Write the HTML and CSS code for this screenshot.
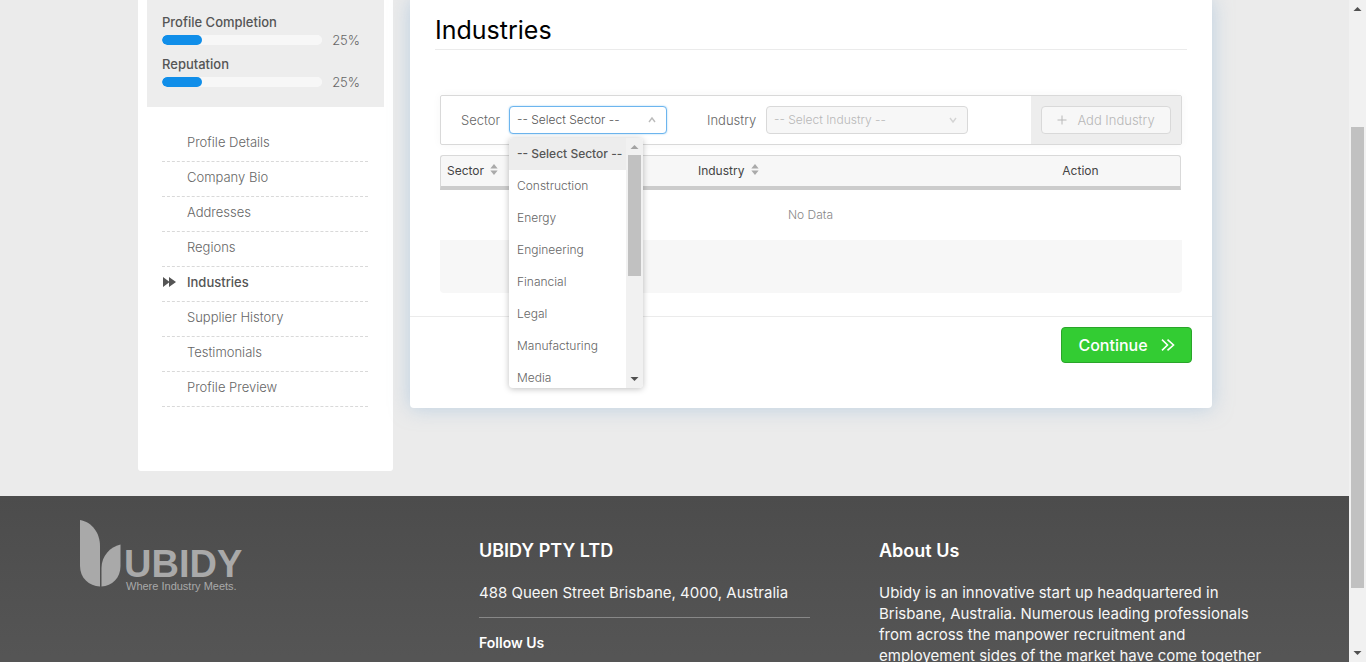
FILE: index.html
```html
<!DOCTYPE html>
<html lang="en">
<head>
<meta charset="utf-8">
<title>Industries - Ubidy</title>
<link rel="stylesheet" href="styles.css">
</head>
<body>
<div class="shell">
  <div class="page">
    <main class="content">
      <aside class="sidebar">
        <section class="stats">
          <label class="stat-label" for="completion">Profile Completion</label>
          <div class="stat-row"><progress id="completion" class="bar" value="25" max="100"></progress><span>25%</span></div>
          <label class="stat-label" for="reputation">Reputation</label>
          <div class="stat-row"><progress id="reputation" class="bar" value="25" max="100"></progress><span>25%</span></div>
        </section>
        <nav class="menu">
          <a href="#">Profile Details</a>
          <a href="#">Company Bio</a>
          <a href="#">Addresses</a>
          <a href="#">Regions</a>
          <a href="#" class="active"><svg class="marker" viewBox="0 0 13 10" aria-hidden="true"><path d="M0 0 6 4.4V0l7 5-7 5V5.6L0 10z"/></svg>Industries</a>
          <a href="#">Supplier History</a>
          <a href="#">Testimonials</a>
          <a href="#">Profile Preview</a>
        </nav>
      </aside>

      <section class="panel">
        <div class="panel-body">
          <h1>Industries</h1>
          <div class="editor">
            <form class="filters">
              <div class="fields">
                <label for="sector">Sector</label>
                <div class="picker picker-sector">
                  <select id="sector"><option>-- Select Sector --</option></select>
                  <svg class="chevron" viewBox="0 0 8 8" aria-hidden="true"><path d="M1 6 4 2l3 4"/></svg>
                  <div class="dropdown">
                    <ul class="options">
                      <li class="selected">-- Select Sector --</li>
                      <li>Construction</li>
                      <li>Energy</li>
                      <li>Engineering</li>
                      <li>Financial</li>
                      <li>Legal</li>
                      <li>Manufacturing</li>
                      <li>Media</li>
                    </ul>
                    <div class="scroll">
                      <svg class="arrow dim" viewBox="0 0 17 17" aria-hidden="true"><path d="M4.500 11 8.500 7l4 4z"/></svg>
                      <div class="track"><div class="thumb list-thumb"></div></div>
                      <svg class="arrow" viewBox="0 0 17 17" aria-hidden="true"><path d="M4.500 6 8.500 10l4-4z"/></svg>
                    </div>
                  </div>
                </div>
                <label class="second" for="industry">Industry</label>
                <div class="picker picker-industry">
                  <select id="industry" disabled><option>-- Select Industry --</option></select>
                  <svg class="chevron faint" viewBox="0 0 8 8" aria-hidden="true"><path d="M1 2l3 4 3-4"/></svg>
                </div>
              </div>
              <div class="add"><button type="button" disabled><svg viewBox="0 0 10 10" aria-hidden="true"><path d="M5 .5v9M.5 5h9"/></svg>Add Industry</button></div>
            </form>
            <table>
              <thead><tr>
                <th class="c1">Sector <svg class="sort" viewBox="0 0 8 12" aria-hidden="true"><path d="M4 0l4 5H0zM4 12 0 7h8z"/></svg></th>
                <th class="c2">Industry <svg class="sort" viewBox="0 0 8 12" aria-hidden="true"><path d="M4 0l4 5H0zM4 12 0 7h8z"/></svg></th>
                <th class="c3">Action</th>
              </tr></thead>
              <tbody><tr><td colspan="3">No Data</td></tr></tbody>
            </table>
            <div class="pager"></div>
          </div>
        </div>
        <div class="panel-foot"><button type="button" class="continue">Continue<svg viewBox="0 0 14 12" aria-hidden="true"><path d="M1 .7 6.500 6 1 11.300M6.500.7 12.500 6l-6 5.300"/></svg></button></div>
      </section>
    </main>

    <footer class="footer">
      <div>
        <svg class="logo" viewBox="0 0 172 72" role="img" aria-label="Ubidy">
          <path d="M0 0C12 2 20 13 20 26v40.500C9 66 0 58 0 46z"/>
          <path d="M21.500 66.500V48C21.500 36 30 27 40.500 24.500V46C40.500 58 32 66 21.500 66.500z"/>
          <text class="brand" x="44" y="57">UBIDY</text>
          <text class="tagline" x="46" y="70">Where Industry Meets.</text>
        </svg>
      </div>
      <div class="company">
        <h2>UBIDY PTY LTD</h2>
        <p>488 Queen Street Brisbane, 4000, Australia</p>
        <h3>Follow Us</h3>
      </div>
      <div>
        <h2>About Us</h2>
        <p>Ubidy is an innovative start up headquartered in<br>Brisbane, Australia. Numerous leading professionals<br>from across the manpower recruitment and<br>employement sides of the market have come together</p>
      </div>
    </footer>
  </div>
  <div class="scroll">
    <svg class="arrow" viewBox="0 0 17 17" aria-hidden="true"><path d="M4.500 11 8.500 7l4 4z"/></svg>
    <div class="track page-track"><div class="thumb page-thumb"></div></div>
    <svg class="arrow" viewBox="0 0 17 17" aria-hidden="true"><path d="M4.500 6 8.500 10l4-4z"/></svg>
  </div>
</div>
</body>
</html>
```
FILE: styles.css
```css
* { box-sizing: border-box; }
body { margin: 0; font-family: Inter, "Liberation Sans", sans-serif; font-size: 13px; line-height: 20px; color: #666; background: #ebebeb; }
h1, h2, h3, p, ul { margin: 0; padding: 0; }
button, select { font: inherit; }

.shell { display: flex; height: 100vh; overflow: hidden; }
.page { flex: 1; min-width: 0; display: flex; flex-direction: column; }
.content { display: grid; grid-template-columns: 255px minmax(0, 1fr); column-gap: 17px; align-items: start; padding: 0 137px 25px 138px; }

.sidebar { background: #fff; border-radius: 0 0 3px 3px; padding: 0 9px 64px; }
.stats { background: #ededed; padding: 12px 24px 11px 15px; }
.stat-label { display: block; font-weight: 500; color: #555; }
.stat-row { display: flex; align-items: center; gap: 10px; height: 16px; margin-bottom: 6px; }
.stat-row span { color: #666; font-weight: 300; }
.bar { appearance: none; flex: 1; min-width: 0; height: 10px; border: 0; border-radius: 5px; overflow: hidden; background: #f7f7f7; }
.bar::-webkit-progress-bar { background: #f7f7f7; border-radius: 5px; }
.bar::-webkit-progress-value { background: #108ee9; border-radius: 5px; }
.menu { padding: 20px 16px 0 15px; }
.menu a { display: block; position: relative; height: 35px; padding: 5px 0 0 25px; border-bottom: 1px dashed #d9d9d9; color: #666; font-weight: 300; text-decoration: none; }
.menu .active { color: #555; font-weight: 500; }
.marker { position: absolute; left: 1px; top: 10px; width: 13px; height: 10px; fill: #555; }

.panel { background: #fff; border-radius: 0 0 4px 4px; box-shadow: 0 0 20px rgba(140, 180, 215, .5); padding-bottom: 45px; }
.panel-body { padding: 12px 25px 23px; }
h1 { font-size: 25px; line-height: 37px; font-weight: 400; color: #000; border-bottom: 1px solid #ebebeb; }
.editor { padding: 45px 5px 0; }
.filters { display: flex; height: 50px; border: 1px solid #d9d9d9; border-radius: 2px; box-shadow: 0 0 10px rgba(0, 0, 0, .04); }
.fields { flex: 1; display: flex; align-items: center; padding-left: 20px; font-weight: 300; }
.fields label { width: 48px; white-space: nowrap; }
.fields .second { width: 59px; margin-left: 40px; }
.picker { position: relative; height: 28px; }
.picker-sector { width: 158px; }
.picker-industry { width: 202px; }
select { appearance: none; width: 100%; height: 28px; padding: 0 7px; border: 1px solid #d9d9d9; border-radius: 4px; background: #fff; color: #555; font-size: 12px; font-weight: 300; }
.picker-sector select { border-color: #6db5ee; box-shadow: 0 0 2px rgba(16, 142, 233, .4); }
select:disabled { background: #f7f7f7; color: #b8b8b8; opacity: 1; }
.chevron { position: absolute; right: 11px; top: 10px; width: 8px; height: 8px; fill: none; stroke: #bbb; stroke-width: 1.400; }
.faint { stroke: #d4d4d4; }
.add { flex: 0 0 150px; padding: 10px; background: #ededed; }
.add button { display: flex; align-items: center; justify-content: center; gap: 10px; width: 130px; height: 28px; padding: 0; border: 1px solid #d9d9d9; border-radius: 4px; background: #f7f7f7; color: #b8b8b8; font-weight: 300; white-space: nowrap; }
.add svg { width: 10px; height: 10px; stroke: #b8b8b8; }

.dropdown { position: absolute; z-index: 2; left: 0; top: 32px; display: flex; width: 134px; height: 250px; border-radius: 4px; overflow: hidden; background: #fff; box-shadow: 0 1px 6px rgba(0, 0, 0, .25); }
.options { flex: 1; list-style: none; overflow: hidden; }
.options li { height: 32px; padding: 6px 0 6px 8px; font-size: 12px; white-space: nowrap; }
.options .selected { background: #ededed; font-weight: 500; color: #555; }

.scroll { flex: 0 0 17px; display: flex; flex-direction: column; background: #f1f1f1; }
.arrow { width: 17px; height: 17px; flex: none; fill: #505050; }
.dim { fill: #a3a3a3; }
.track { flex: 1; padding: 0 2px; }
.thumb { background: #c1c1c1; }
.list-thumb { height: 56%; }
.page-track { padding-top: 110px; }
.page-thumb { height: 89%; }

table { width: calc(100% - 1px); margin-top: 10px; border-collapse: separate; border-spacing: 0; table-layout: fixed; }
th { height: 35px; padding: 0 6px 1px; text-align: left; font-weight: 400; font-size: 12px; color: #444; background: #f7f7f7; border-top: 1px solid #d9d9d9; border-bottom: 4px solid #ccc; }
.c1 { width: 34%; border-left: 1px solid #d9d9d9; border-top-left-radius: 3px; }
.c2 { width: 39%; }
.c3 { width: 27%; padding-right: 6px; text-align: center; border-right: 1px solid #d9d9d9; border-top-right-radius: 3px; }
.sort { width: 8px; height: 11px; margin-left: 3px; fill: #aaa; }
td { height: 50px; padding: 0; text-align: center; font-size: 12px; font-weight: 300; color: #888; }
.pager { height: 53px; background: #f7f7f7; border-radius: 0 0 4px 4px; }
.panel-foot { display: flex; justify-content: flex-end; padding: 10px 20px 0; border-top: 1px solid #ebebeb; }
.continue { display: flex; align-items: center; justify-content: center; gap: 13px; width: 131px; height: 36px; padding: 0; border: 1px solid #2aa52a; border-radius: 4px; background: #33cc33; color: #fff; font-size: 16px; font-weight: 500; }
.continue svg { width: 14px; height: 12px; fill: none; stroke: #fff; stroke-width: 1.600; }

.footer { flex: 1 0 auto; display: grid; grid-template-columns: repeat(3, minmax(0, 1fr)); align-items: start; padding: 24px 70px 0 79px; background: linear-gradient(#4c4c4c, #555 160px); color: #f7f7f7; font-size: 15px; line-height: 21px; }
.logo { display: block; width: 172px; height: 72px; margin-left: 1px; fill: #a9a9a9; }
.brand { font: bold 38px "Liberation Sans", sans-serif; }
.tagline { font: 11px "Liberation Sans", sans-serif; }
h2 { margin: 20px 0; font-size: 18px; line-height: 22px; font-weight: 600; color: #fff; }
.company h3 { width: 331px; max-width: 100%; margin-top: 14px; padding-top: 14px; border-top: 1px solid #888; font-size: 14px; line-height: 21px; font-weight: 600; color: #fff; }
```
